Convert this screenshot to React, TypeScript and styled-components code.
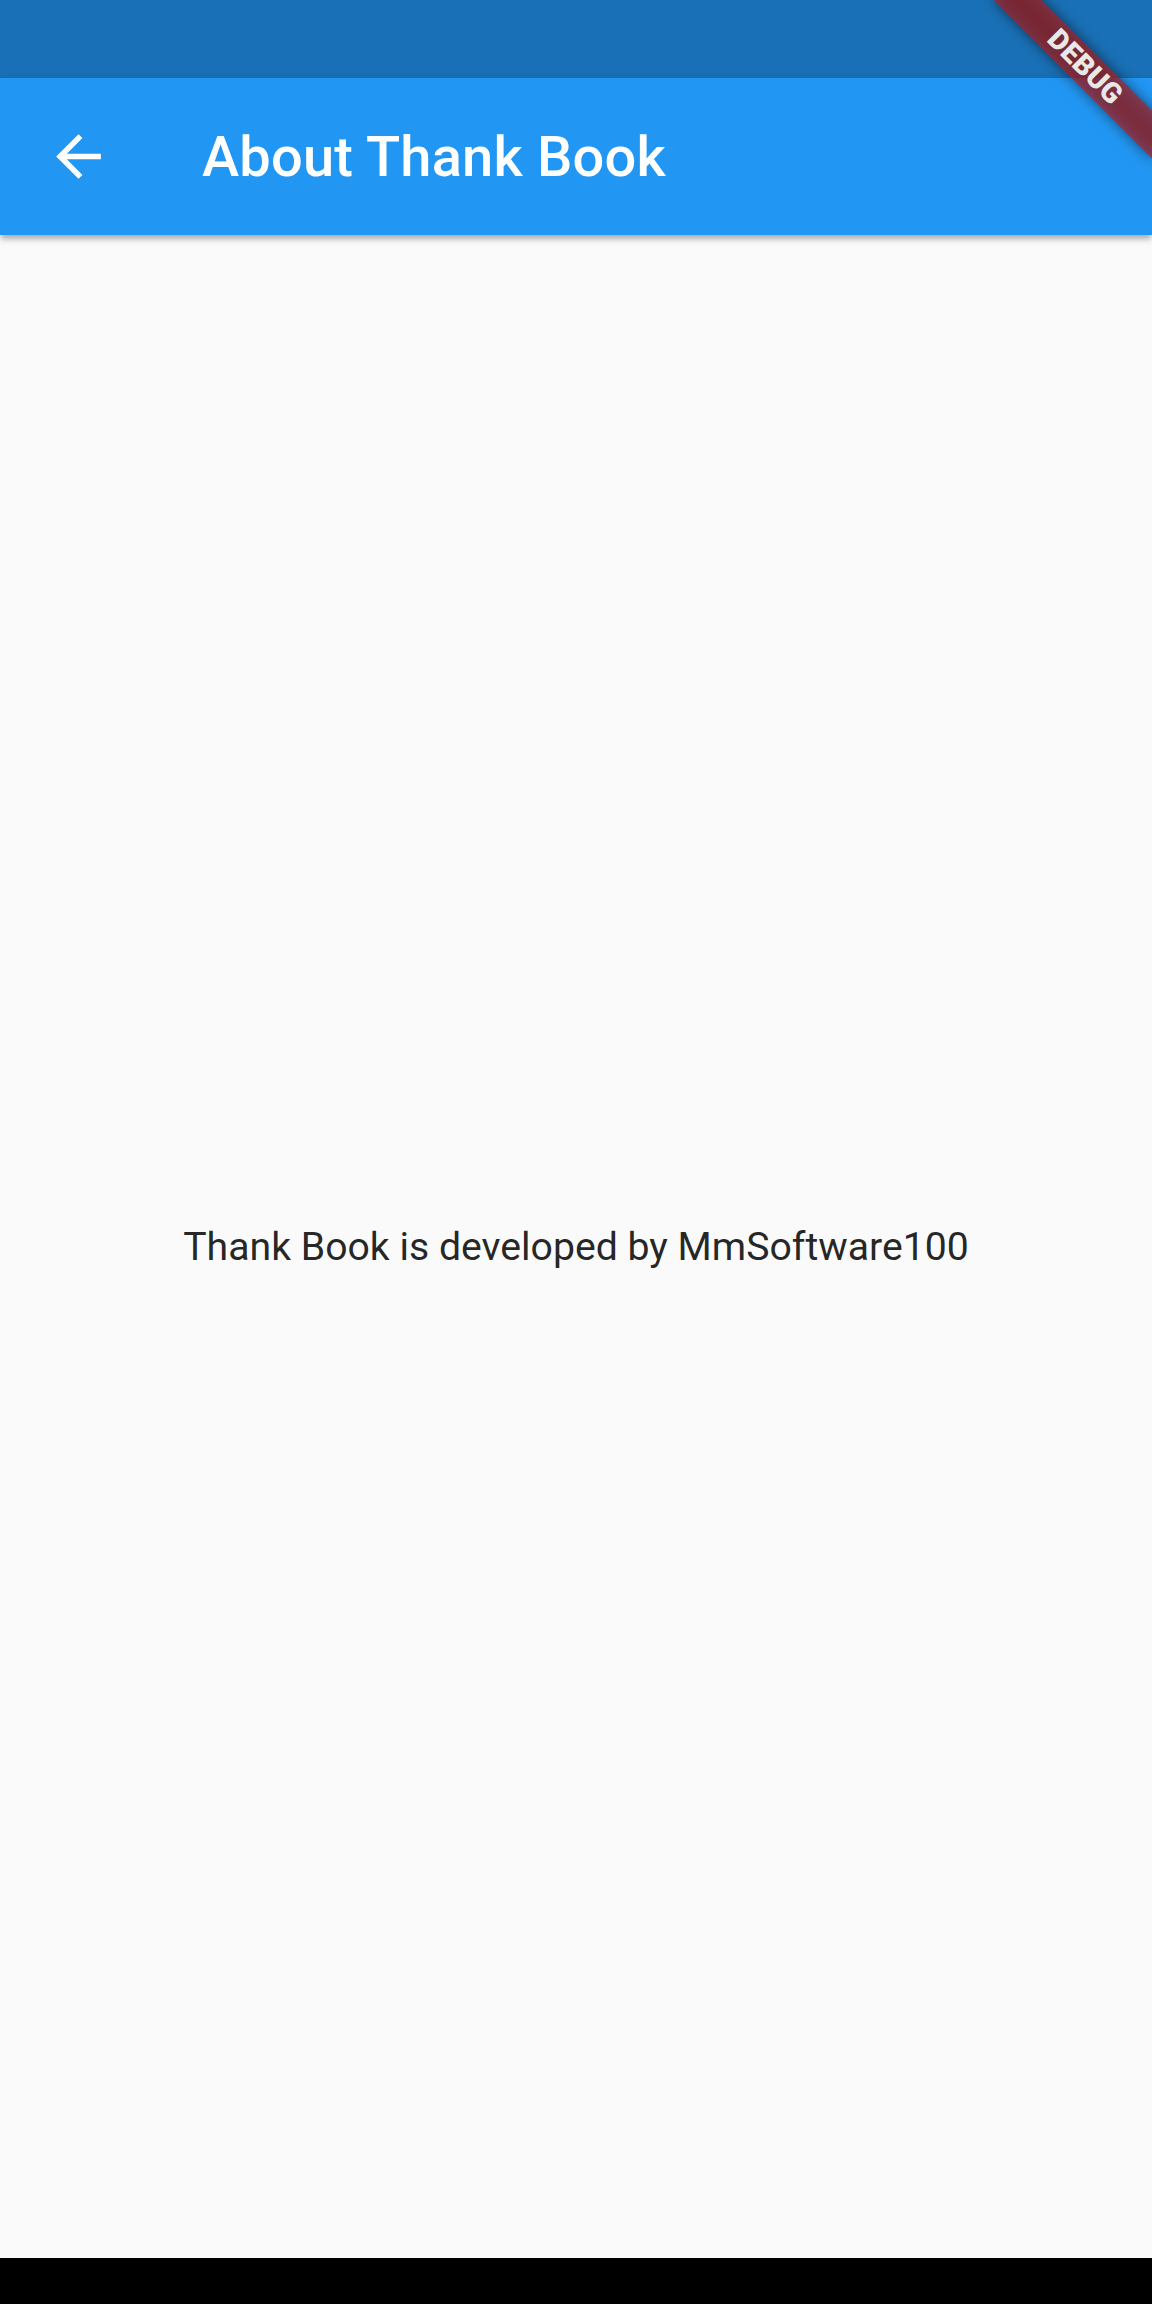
import styled, { createGlobalStyle } from 'styled-components';
import { MdArrowBack } from 'react-icons/md';

const GlobalStyle = createGlobalStyle`
    html, body {
        margin: 0;
        padding: 0;
        background: #fafafa;
    }
    body {
        font-family: Roboto, "Noto Sans", sans-serif;
    }
`;

const Screen = styled.div`
    position: relative;
    display: flex;
    flex-direction: column;
    width: 1152px;
    height: 2304px;
    overflow: hidden;
    background: #fafafa;
`;

const StatusBar = styled.div`
    height: 78px;
    flex: none;
    background: #1970b6;
`;

const AppBar = styled.header`
    position: relative;
    z-index: 1;
    display: flex;
    align-items: center;
    height: 157px;
    flex: none;
    background: #2196f3;
    box-shadow: 0 5px 6px rgba(0, 0, 0, 0.14), 0 2px 10px rgba(0, 0, 0, 0.1),
        0 5px 4px -2px rgba(0, 0, 0, 0.12);
`;

const BackButton = styled.button`
    display: flex;
    align-items: center;
    justify-content: center;
    width: 157px;
    height: 157px;
    padding: 0;
    border: none;
    background: transparent;
    color: #fff;
    cursor: pointer;
`;

const Title = styled.h1`
    margin: 0 0 0 45px;
    font-family: Roboto, sans-serif;
    font-size: 56px;
    font-weight: 500;
    color: #fff;
    letter-spacing: 0.2px;
`;

const Body = styled.main`
    flex: 1;
    display: flex;
    align-items: center;
    justify-content: center;
`;

const Message = styled.p`
    margin: 0;
    font-family: Roboto, sans-serif;
    font-size: 39.2px;
    font-weight: 400;
    color: rgba(0, 0, 0, 0.87);
`;

const NavBar = styled.div`
    height: 46px;
    flex: none;
    background: #000;
`;

const BannerCorner = styled.div`
    position: absolute;
    top: 0;
    right: 0;
    width: 0;
    height: 0;
    z-index: 5;
`;

const Ribbon = styled.div`
    position: absolute;
    left: -112px;
    top: 78px;
    width: 224px;
    height: 34px;
    transform-origin: 112px -78px;
    transform: rotate(45deg);
    display: flex;
    align-items: center;
    justify-content: center;

    &::before {
        content: '';
        position: absolute;
        inset: 0;
        background: rgba(0, 0, 0, 0.5);
        filter: blur(7px);
    }
    &::after {
        content: '';
        position: absolute;
        inset: 0;
        background: rgba(183, 28, 28, 0.63);
    }
`;

const RibbonText = styled.span`
    position: relative;
    z-index: 1;
    font-family: Roboto, sans-serif;
    font-size: 28.5px;
    font-weight: 900;
    line-height: 1;
    color: #e8e8e8;
    letter-spacing: 0.3px;
`;

export default function App() {
    return (
        <>
            <GlobalStyle />
            <Screen>
                <StatusBar />
                <AppBar>
                    <BackButton aria-label="Back">
                        <MdArrowBack size={67} />
                    </BackButton>
                    <Title>About Thank Book</Title>
                </AppBar>
                <Body>
                    <Message>Thank Book is developed by MmSoftware100</Message>
                </Body>
                <NavBar />
                <BannerCorner>
                    <Ribbon>
                        <RibbonText>DEBUG</RibbonText>
                    </Ribbon>
                </BannerCorner>
            </Screen>
        </>
    );
}
